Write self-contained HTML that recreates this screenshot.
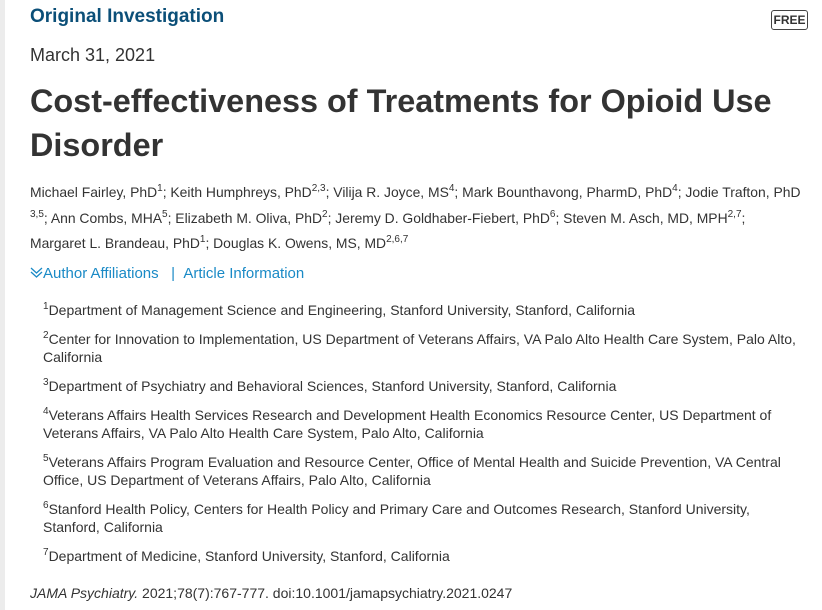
<!DOCTYPE html>
<html><head><meta charset="utf-8"><style>
body{margin:0;width:822px;height:610px;background:#fff;font-family:"Liberation Sans",sans-serif;color:#333;position:relative;overflow:hidden}
.strip{position:absolute;left:0;top:0;width:5px;height:610px;background:#ececec}
.a{position:absolute;left:30px;white-space:nowrap}
sup{font-size:10px;vertical-align:6px;line-height:0}
.free{position:absolute;left:771px;top:10px;width:35px;height:18px;border:1.5px solid #444;border-radius:3px;font-weight:bold;font-size:12px;line-height:18px;text-align:center;color:#333}
.aff{position:absolute;left:43px;font-size:14px;line-height:18px;color:#333;white-space:nowrap}
</style></head><body>
<div class="strip"></div>
<div class="a" style="top:6px;font-size:19px;font-weight:bold;color:#0b4f78">Original Investigation</div>
<div class="free">FREE</div>
<div class="a" style="top:45px;font-size:18px;color:#333">March 31, 2021</div>
<div class="a" style="top:79px;font-size:32.4px;font-weight:bold;line-height:44px;color:#333">Cost-effectiveness of Treatments for Opioid Use<br>Disorder</div>
<div class="a" style="top:180px;font-size:13.9px;line-height:25.5px">Michael Fairley, PhD<sup>1</sup>; Keith Humphreys, PhD<sup>2,3</sup>; Vilija R. Joyce, MS<sup>4</sup>; Mark Bounthavong, PharmD, PhD<sup>4</sup>; Jodie Trafton, PhD<br><sup>3,5</sup>; Ann Combs, MHA<sup>5</sup>; Elizabeth M. Oliva, PhD<sup>2</sup>; Jeremy D. Goldhaber-Fiebert, PhD<sup>6</sup>; Steven M. Asch, MD, MPH<sup>2,7</sup>;<br>Margaret L. Brandeau, PhD<sup>1</sup>; Douglas K. Owens, MS, MD<sup>2,6,7</sup></div>
<div class="a" style="top:265px;font-size:15px;color:#1a8ac6"><svg width="13" height="12" viewBox="0 0 13 12" style="vertical-align:-1px"><path d="M1 1l5.5 5 5.5-5M1 5l5.5 5 5.5-5" fill="none" stroke="#1a8ac6" stroke-width="1.3"/></svg>Author Affiliations &nbsp; | &nbsp;Article Information</div>
<div class="aff" style="top:301px"><sup>1</sup>Department of Management Science and Engineering, Stanford University, Stanford, California</div>
<div class="aff" style="top:330px"><sup>2</sup>Center for Innovation to Implementation, US Department of Veterans Affairs, VA Palo Alto Health Care System, Palo Alto,<br>California</div>
<div class="aff" style="top:377px"><sup>3</sup>Department of Psychiatry and Behavioral Sciences, Stanford University, Stanford, California</div>
<div class="aff" style="top:406px"><sup>4</sup>Veterans Affairs Health Services Research and Development Health Economics Resource Center, US Department of<br>Veterans Affairs, VA Palo Alto Health Care System, Palo Alto, California</div>
<div class="aff" style="top:453px"><sup>5</sup>Veterans Affairs Program Evaluation and Resource Center, Office of Mental Health and Suicide Prevention, VA Central<br>Office, US Department of Veterans Affairs, Palo Alto, California</div>
<div class="aff" style="top:500px"><sup>6</sup>Stanford Health Policy, Centers for Health Policy and Primary Care and Outcomes Research, Stanford University,<br>Stanford, California</div>
<div class="aff" style="top:547px"><sup>7</sup>Department of Medicine, Stanford University, Stanford, California</div>
<div class="a" style="top:585px;font-size:14px"><i>JAMA Psychiatry.</i> 2021;78(7):767-777. doi:10.1001/jamapsychiatry.2021.0247</div>
</body></html>
